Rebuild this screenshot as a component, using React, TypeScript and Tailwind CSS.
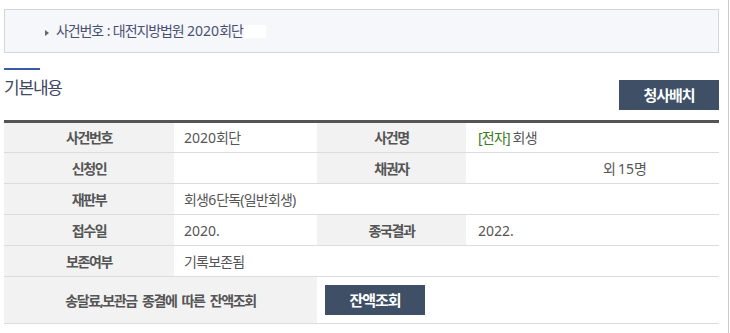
const KR = { fontFamily: '"Noto Sans", "Noto Sans CJK KR", sans-serif' };

function N({ children }: { children: React.ReactNode }) {
  return <span className="tracking-normal">{children}</span>;
}

function Th({ children, colSpan }: { children: React.ReactNode; colSpan?: number }) {
  return (
    <th
      colSpan={colSpan}
      className="h-[31px] border-b border-[#dcdcdc] bg-[#f2f2f2] p-0 text-center text-[14px] font-bold text-[#555] tracking-[-1.4px]"
    >
      {children}
    </th>
  );
}

function Td({ children, colSpan, className = "" }: { children?: React.ReactNode; colSpan?: number; className?: string }) {
  return (
    <td
      colSpan={colSpan}
      className={`h-[31px] border-b border-[#dcdcdc] bg-white py-0 pl-[10px] text-left text-[14px] text-[#555] tracking-[-0.8px] ${className}`}
    >
      {children}
    </td>
  );
}

export default function App() {
  return (
    <div className="h-[333px] w-[730px] overflow-hidden bg-white" style={KR}>
      <div className="flex h-full">
        <div className="ml-[4px] w-[715px]">
          {/* case header box */}
          <div className="mt-[9px] flex h-[44px] items-center border border-[#d3d6de] bg-[#f6f7fb] pl-[40px]">
            <span className="mt-[4px] mr-[7px] h-0 w-0 border-y-[3px] border-l-[4px] border-y-transparent border-l-[#666]" />
            <span className="text-[14px] leading-none text-[#4a5070] tracking-[-1.1px] [word-spacing:1px]">
              사건번호 : 대전지방법원 <N>2020</N>회단
            </span>
            <span className="ml-[1px] inline-block h-[13px] w-[22px] bg-white" />
          </div>

          {/* title row */}
          <div className="mt-[15px] flex items-start justify-between">
            <div>
              <div className="h-[2px] w-[36px] bg-[#3b5ba8]" />
              <h2 className="mt-[8px] text-[17px] leading-[20px] font-normal text-[#3e4662] tracking-[-1.2px]">기본내용</h2>
            </div>
            <button className="mt-[12px] h-[30px] w-[100px] bg-[#3e4f66] text-[15px] font-bold text-white tracking-[-1px]">
              청사배치
            </button>
          </div>

          {/* basic info table */}
          <table className="mt-[10px] w-[715px] table-fixed border-collapse border-t-[3px] border-t-[#555]">
            <colgroup>
              <col className="w-[170px]" />
              <col className="w-[143px]" />
              <col className="w-[149px]" />
              <col className="w-[253px]" />
            </colgroup>
            <tbody>
              <tr>
                <Th>사건번호</Th>
                <Td>
                  <N>2020</N>회단
                </Td>
                <Th>사건명</Th>
                <Td className="pl-[12px]">
                  <span className="text-[#3a7a22]">[전자]</span>&nbsp;회생
                </Td>
              </tr>
              <tr>
                <Th>신청인</Th>
                <Td />
                <Th>채권자</Th>
                <Td className="pl-[137px]">
                  외&nbsp;<N>15</N>명
                </Td>
              </tr>
              <tr>
                <Th>재판부</Th>
                <Td colSpan={3}>
                  회생<N>6</N>단독(일반회생)
                </Td>
              </tr>
              <tr>
                <Th>접수일</Th>
                <Td>
                  <N>2020.</N>
                </Td>
                <Th>종국결과</Th>
                <Td className="pl-[12px]">
                  <N>2022.</N>
                </Td>
              </tr>
              <tr>
                <Th>보존여부</Th>
                <Td colSpan={3}>기록보존됨</Td>
              </tr>
              <tr>
                <th
                  colSpan={2}
                  className="h-[47px] border-b border-[#dcdcdc] bg-[#f2f2f2] p-0 text-center text-[14px] font-bold text-[#555] tracking-[-1.4px] [word-spacing:3px]"
                >
                  송달료,보관금 종결에 따른 잔액조회
                </th>
                <td colSpan={2} className="h-[47px] border-b border-[#dcdcdc] bg-white py-0 pl-[8px]">
                  <button className="h-[30px] w-[100px] bg-[#3e4f66] text-[15px] font-bold text-white tracking-[-1px]">
                    잔액조회
                  </button>
                </td>
              </tr>
            </tbody>
          </table>
        </div>
        <div className="ml-[9px] h-full w-px bg-[#cccccc]" />
      </div>
    </div>
  );
}
